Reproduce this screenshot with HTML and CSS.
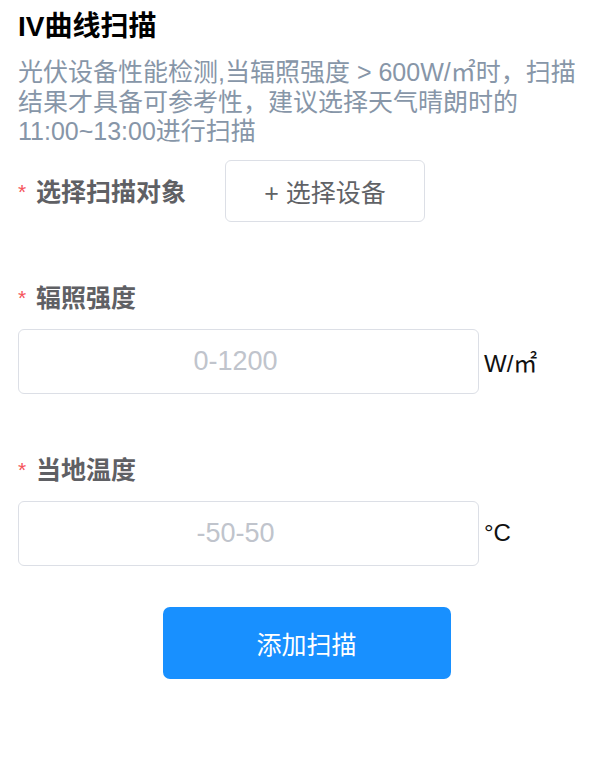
FILE: index.html
```html
<!DOCTYPE html>
<html lang="zh-CN">
<head>
<meta charset="utf-8">
<title>IV曲线扫描</title>
<link rel="stylesheet" href="styles.css">
</head>
<body>
<div class="page">
  <h1 class="title">IV曲线扫描</h1>
  <p class="desc">光伏设备性能检测,当辐照强度 &gt; 600W/㎡时，扫描结果才具备可参考性，建议选择天气晴朗时的11:00~13:00进行扫描</p>

  <div class="item item-inline">
    <div class="label"><span class="req">*</span>选择扫描对象</div>
    <button class="select-btn" type="button">+ 选择设备</button>
  </div>

  <div class="item">
    <div class="label"><span class="req">*</span>辐照强度</div>
    <div class="field">
      <input class="input" type="text" placeholder="0-1200">
      <span class="unit">W/㎡</span>
    </div>
  </div>

  <div class="item">
    <div class="label"><span class="req">*</span>当地温度</div>
    <div class="field">
      <input class="input" type="text" placeholder="-50-50">
      <span class="unit">°C</span>
    </div>
  </div>

  <div class="actions">
    <button class="submit" type="button">添加扫描</button>
  </div>
</div>
</body>
</html>
```

FILE: styles.css
```css
* { box-sizing: border-box; }
html, body {
  margin: 0;
  padding: 0;
  background: #fff;
}
body {
  font-family: "Liberation Sans", "Noto Sans CJK SC", sans-serif;
}
.page {
  padding: 9px 18px 0 18px;
}
.title {
  margin: 0;
  font-size: 28px;
  line-height: 36px;
  font-weight: bold;
  color: #000;
}
.desc {
  margin: 13px 0 0 0;
  font-size: 25px;
  line-height: 29.5px;
  color: #8796a8;
}
.item {
  margin-top: 20px;
}
.item-inline {
  display: flex;
  align-items: center;
  margin-top: 13px;
}
.label {
  font-size: 25px;
  line-height: 36px;
  font-weight: bold;
  color: #5f6064;
  font-family: "Noto Sans CJK SC", sans-serif;
}
.item-inline .label {
  width: 207px;
  flex: none;
}
.req {
  display: inline-block;
  width: 18px;
  color: #f5545a;
  font-weight: normal;
  font-size: 21px;
  vertical-align: 2px;
  font-family: "Liberation Sans", sans-serif;
}
.select-btn {
  width: 200px;
  height: 62px;
  border: 1px solid #dcdfe6;
  border-radius: 6px;
  background: #fff;
  color: #606266;
  font-size: 25px;
  font-family: "Liberation Sans", "Noto Sans CJK SC", sans-serif;
  padding: 0;
}
.item + .item:not(.item-inline) {
  margin-top: 56px;
}
.field {
  display: flex;
  align-items: center;
  margin-top: 13px;
}
.input {
  width: 461px;
  height: 65px;
  border: 1px solid #dcdfe6;
  border-radius: 6px;
  text-align: center;
  font-size: 27px;
  font-family: "Liberation Sans", "Noto Sans CJK SC", sans-serif;
  color: #333;
  outline: none;
  padding: 0 26px 0 0;
}
.input::placeholder {
  color: #c0c4cc;
}
.unit {
  margin-left: 5px;
  font-size: 24px;
  color: #111;
}
.actions {
  display: flex;
  justify-content: center;
  margin-top: 41px;
  margin-right: -18px;
  margin-left: -18px;
}
.submit {
  width: 288px;
  height: 72px;
  border: none;
  border-radius: 7px;
  background: #1890ff;
  color: #fff;
  font-size: 25px;
  font-family: "Noto Sans CJK SC", sans-serif;
  padding: 0;
}
```
